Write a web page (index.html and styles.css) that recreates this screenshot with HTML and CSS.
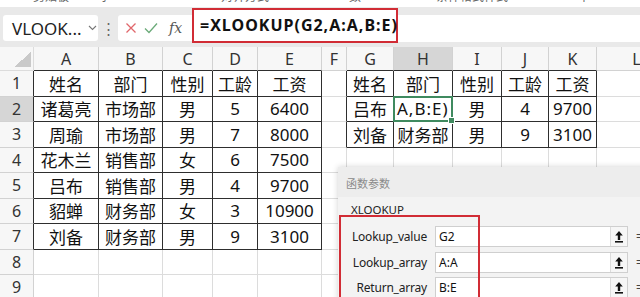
FILE: index.html
```html
<!DOCTYPE html>
<html lang="zh-CN">
  <head>
    <meta charset="UTF-8" />
    <meta name="viewport" content="width=device-width, initial-scale=1.0" />
    <title>XLOOKUP - 函数参数</title>

    <link rel="stylesheet" href="styles.css">
  </head>
  <body>
    <div class="app">
      <div class="ribbon">
        <span class="r1">剪贴板</span>
        <span class="r2">字</span>
        <span class="r3">对齐方式</span>
        <span class="r4">数</span>
        <span class="r5">条件格式样式</span>
        <span class="r6">单</span>
      </div>

      <div class="bar">
        <div class="namebox">
          <span>VLOOK...</span>
          <svg class="chev" width="9" height="6" viewBox="0 0 9 6"><path d="M1 1l3.5 3.5L8 1" fill="none" stroke="#777" stroke-width="1.1"/></svg>
        </div>
        <div class="dots">⋮</div>
        <div class="fxbox">
          <svg width="12" height="12" viewBox="0 0 12 12"><path d="M1.5 1.5l9 9M10.5 1.5l-9 9" stroke="#e0676b" stroke-width="1.3" fill="none"/></svg>
          <svg width="14" height="12" viewBox="0 0 14 12"><path d="M1 6.5l4 4L13 1.5" stroke="#6aaa78" stroke-width="1.3" fill="none"/></svg>
          <span class="fx">fx</span>
        </div>
        <div class="formula">
          <div class="hl">=XLOOKUP(G2,A:A,B:E)</div>
          <div class="rest"></div>
        </div>
      </div>

      <div class="sheet">
        <!-- header -->
        <div class="c corner"></div>
        <div class="c hd eb">A</div>
        <div class="c hd eb">B</div>
        <div class="c hd eb">C</div>
        <div class="c hd eb">D</div>
        <div class="c hd eb">E</div>
        <div class="c hd">F</div>
        <div class="c hd eb">G</div>
        <div class="c hd eb on">H</div>
        <div class="c hd eb">I</div>
        <div class="c hd eb">J</div>
        <div class="c hd eb">K</div>
        <div class="c hd">L</div>

        <!-- 1 -->
        <div class="c rh er">1</div>
        <div class="c t">姓名</div>
        <div class="c t">部门</div>
        <div class="c t">性别</div>
        <div class="c t">工龄</div>
        <div class="c t">工资</div>
        <div class="c er"></div>
        <div class="c t">姓名</div>
        <div class="c t">部门</div>
        <div class="c t">性别</div>
        <div class="c t">工龄</div>
        <div class="c t">工资</div>
        <div class="c"></div>

        <!-- 2 -->
        <div class="c rh er on">2</div>
        <div class="c t">诸葛亮</div>
        <div class="c t">市场部</div>
        <div class="c t">男</div>
        <div class="c t">5</div>
        <div class="c t">6400</div>
        <div class="c er"></div>
        <div class="c t">吕布</div>
        <div class="c t sel">A,B:E)</div>
        <div class="c t">男</div>
        <div class="c t">4</div>
        <div class="c t">9700</div>
        <div class="c"></div>

        <!-- 3 -->
        <div class="c rh er">3</div>
        <div class="c t">周瑜</div>
        <div class="c t">市场部</div>
        <div class="c t">男</div>
        <div class="c t">7</div>
        <div class="c t">8000</div>
        <div class="c er"></div>
        <div class="c t">刘备</div>
        <div class="c t">财务部</div>
        <div class="c t">男</div>
        <div class="c t">9</div>
        <div class="c t">3100</div>
        <div class="c"></div>

        <!-- 4 -->
        <div class="c rh er">4</div>
        <div class="c t">花木兰</div>
        <div class="c t">销售部</div>
        <div class="c t">女</div>
        <div class="c t">6</div>
        <div class="c t">7500</div>
        <div class="c"></div>
        <div class="c"></div>
        <div class="c"></div>
        <div class="c"></div>
        <div class="c"></div>
        <div class="c"></div>
        <div class="c"></div>

        <!-- 5 -->
        <div class="c rh er">5</div>
        <div class="c t">吕布</div>
        <div class="c t">销售部</div>
        <div class="c t">男</div>
        <div class="c t">4</div>
        <div class="c t">9700</div>
        <div class="c"></div>
        <div class="c"></div>
        <div class="c"></div>
        <div class="c"></div>
        <div class="c"></div>
        <div class="c"></div>
        <div class="c"></div>

        <!-- 6 -->
        <div class="c rh er">6</div>
        <div class="c t">貂蝉</div>
        <div class="c t">财务部</div>
        <div class="c t">女</div>
        <div class="c t">3</div>
        <div class="c t">10900</div>
        <div class="c"></div>
        <div class="c"></div>
        <div class="c"></div>
        <div class="c"></div>
        <div class="c"></div>
        <div class="c"></div>
        <div class="c"></div>

        <!-- 7 -->
        <div class="c rh er">7</div>
        <div class="c t">刘备</div>
        <div class="c t">财务部</div>
        <div class="c t">男</div>
        <div class="c t">9</div>
        <div class="c t">3100</div>
        <div class="c"></div>
        <div class="c"></div>
        <div class="c"></div>
        <div class="c"></div>
        <div class="c"></div>
        <div class="c"></div>
        <div class="c"></div>

        <!-- 8 -->
        <div class="c rh">8</div>
        <div class="c"></div>
        <div class="c"></div>
        <div class="c"></div>
        <div class="c"></div>
        <div class="c"></div>
        <div class="c"></div>
        <div class="c"></div>
        <div class="c"></div>
        <div class="c"></div>
        <div class="c"></div>
        <div class="c"></div>
        <div class="c"></div>

        <!-- 9 -->
        <div class="c rh">9</div>
        <div class="c"></div>
        <div class="c"></div>
        <div class="c"></div>
        <div class="c"></div>
        <div class="c"></div>
        <div class="c"></div>
        <div class="c"></div>
        <div class="c"></div>
        <div class="c"></div>
        <div class="c"></div>
        <div class="c"></div>
        <div class="c"></div>

        <div class="dlg">
          <div class="dlg-title">函数参数</div>
          <div class="dlg-name">XLOOKUP</div>
          <div class="args">
            <div class="arg">
              <label>Lookup_value</label>
              <div class="field">G2<span class="pick"><svg width="10" height="13" viewBox="0 0 10 13"><path d="M5 1L1.2 5.4h2.6V10h2.4V5.4h2.6z" fill="#111"/><rect x="1" y="11" width="8" height="1.6" fill="#111"/></svg></span></div>
              <span class="eq">=</span>
            </div>
            <div class="arg">
              <label>Lookup_array</label>
              <div class="field">A:A<span class="pick"><svg width="10" height="13" viewBox="0 0 10 13"><path d="M5 1L1.2 5.4h2.6V10h2.4V5.4h2.6z" fill="#111"/><rect x="1" y="11" width="8" height="1.6" fill="#111"/></svg></span></div>
              <span class="eq">=</span>
            </div>
            <div class="arg">
              <label>Return_array</label>
              <div class="field">B:E<span class="pick"><svg width="10" height="13" viewBox="0 0 10 13"><path d="M5 1L1.2 5.4h2.6V10h2.4V5.4h2.6z" fill="#111"/><rect x="1" y="11" width="8" height="1.6" fill="#111"/></svg></span></div>
              <span class="eq">=</span>
            </div>
          </div>
          <div class="mark"></div>
        </div>
      </div>
    </div>
  </body>
</html>
```

FILE: styles.css
```css
* {
  margin: 0;
  padding: 0;
  box-sizing: border-box;
}

body {
  width: 640px;
  height: 297px;
  overflow: hidden;
  background-color: #ffffff;
  font-family: "Noto Sans", "Noto Sans CJK SC", sans-serif;
  color: #111;
}

.app {
  width: 640px;
  height: 297px;
  overflow: hidden;
}

/* ribbon, cut off at the top */
.ribbon {
  height: 7px;
  overflow: hidden;
  display: flex;
  font-size: 12px;
  line-height: 12px;
  color: #666;
}

.ribbon span {
  margin-top: -9px;
}

.r1 { margin-left: 33px; }
.r2 { margin-left: 30px; }
.r3 { margin-left: 110px; }
.r4 { margin-left: 80px; }
.r5 { margin-left: 75px; }
.r6 { margin-left: 70px; }

/* formula bar */
.bar {
  height: 40px;
  background-color: #e9e9e9;
  display: flex;
  align-items: flex-start;
}

.namebox {
  width: 95px;
  height: 26px;
  margin: 8px 0 0 3px;
  padding: 0 0 0 9px;
  background: #fff;
  border-radius: 3px;
  display: flex;
  align-items: center;
  font-size: 17px;
  color: #222;
}

.chev {
  margin-left: 6px;
}

.dots {
  width: 20px;
  height: 26px;
  margin-top: 8px;
  text-align: center;
  line-height: 26px;
  font-size: 15px;
  color: #666;
}

.fxbox {
  width: 74px;
  height: 26px;
  margin-top: 8px;
  padding-left: 7px;
  background: #fff;
  border-radius: 3px 0 0 3px;
  display: flex;
  align-items: center;
  gap: 7px;
}

.fx {
  margin-left: 4px;
  font-family: "DejaVu Serif", "Liberation Serif", serif;
  font-style: italic;
  font-size: 14px;
  color: #555;
}

.formula {
  flex: 1;
  display: flex;
  align-items: flex-start;
}

.hl {
  width: 206px;
  height: 35px;
  margin-top: 1px;
  padding-left: 6px;
  border: 2px solid #d12c35;
  background: #fff;
  font-size: 16px;
  font-weight: bold;
  letter-spacing: 1px;
  line-height: 31px;
  color: #111;
  white-space: nowrap;
}

.rest {
  flex: 1;
  height: 27px;
  margin-top: 8px;
  background: #fff;
}

/* sheet grid */
.sheet {
  position: relative;
  display: grid;
  grid-template-columns: 34px 65px 64px 50px 45px 64px 25px 47px 59px 49px 47px 48px 80px;
  grid-template-rows: 24px repeat(9, 25.5px);
  width: 677px;
}

.c {
  display: flex;
  align-items: center;
  justify-content: center;
  border-right: 1px solid #dcdcdc;
  border-bottom: 1px solid #dcdcdc;
  font-size: 17px;
  white-space: nowrap;
  overflow: hidden;
}

.hd,
.rh {
  background: #f7f7f7;
  color: #333;
  font-size: 16px;
  border-color: #d2d2d2;
}

.hd.on,
.rh.on {
  background: #d6d6d6;
}

.corner {
  position: relative;
  background: #f7f7f7;
}

.corner::after {
  content: "";
  position: absolute;
  right: 2px;
  bottom: 3px;
  width: 17px;
  height: 15px;
  background: linear-gradient(to bottom right, transparent 50%, #c9c9c9 50%);
}

.t {
  border-right-color: #2e2e2e;
  border-bottom-color: #2e2e2e;
}

.er {
  border-right-color: #2e2e2e;
}

.eb {
  border-bottom-color: #2e2e2e;
}

.sel {
  position: relative;
  overflow: visible;
  justify-content: flex-start;
  padding-left: 3px;
  letter-spacing: 1px;
}

.sel::before {
  content: "";
  position: absolute;
  left: -1px;
  top: -1px;
  right: -1px;
  bottom: -1px;
  border: 2px solid #3f8a5f;
}

.sel::after {
  content: "";
  position: absolute;
  right: -3px;
  bottom: -3px;
  width: 5px;
  height: 5px;
  background: #3f8a5f;
  border: 1px solid #fff;
}

/* function arguments dialog */
.dlg {
  position: absolute;
  left: 338px;
  top: 120px;
  width: 320px;
  height: 140px;
  background: #f3f3f3;
  box-shadow: 0 0 6px rgba(0, 0, 0, 0.18);
}

.dlg-title {
  height: 30px;
  padding: 8px 0 0 8px;
  background: #ededed;
  font-size: 11px;
  color: #8a8a8a;
}

.dlg-name {
  height: 27px;
  padding: 5px 0 0 13px;
  font-size: 11.5px;
  color: #222;
}

.arg {
  display: flex;
  align-items: center;
  height: 25.5px;
}

.arg label {
  width: 89px;
  text-align: right;
  font-size: 12px;
  letter-spacing: -0.2px;
  color: #222;
}

.field {
  position: relative;
  width: 193px;
  height: 21px;
  margin-left: 8px;
  padding-left: 3px;
  background: #fff;
  border: 1px solid #cfcfcf;
  font-size: 12px;
  line-height: 19px;
  color: #111;
}

.pick {
  position: absolute;
  right: 0;
  top: 0;
  width: 17px;
  height: 19px;
  background: #f6f6f6;
  border-left: 1px solid #dcdcdc;
  display: flex;
  align-items: center;
  justify-content: center;
}

.eq {
  margin-left: 8px;
  font-size: 12px;
  color: #444;
}

.mark {
  position: absolute;
  left: 1px;
  top: 48px;
  width: 141px;
  height: 120px;
  border: 2px solid #d12c35;
}
```
